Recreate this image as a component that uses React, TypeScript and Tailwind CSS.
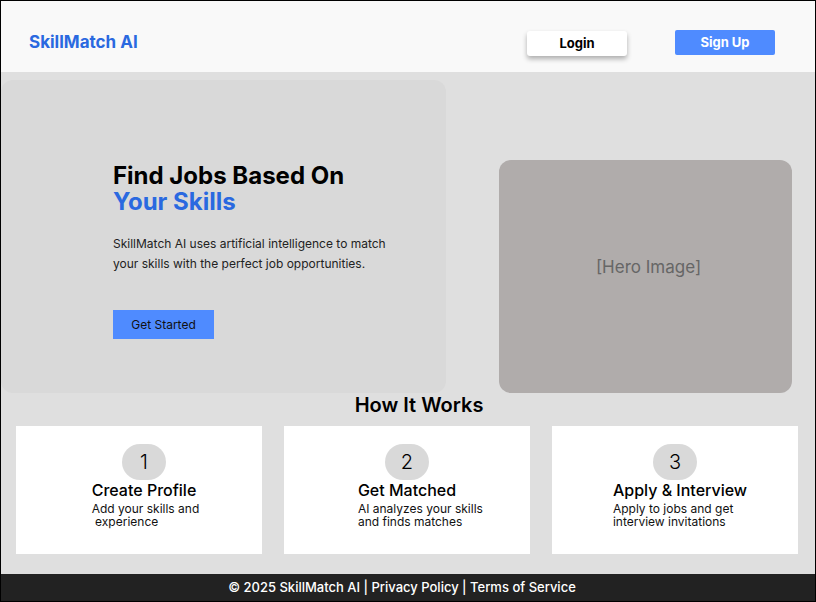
const steps = [
  { n: "1", title: "Create Profile", lines: ["Add your skills and", "\u00a0experience"], pad: "pl-[10px]", shift: "" },
  { n: "2", title: "Get Matched", lines: ["AI analyzes your skills", "and finds matches"], pad: "", shift: "" },
  { n: "3", title: "Apply & Interview", lines: ["Apply to jobs and get", "interview invitations"], pad: "", shift: "pl-[10px]" },
];

export default function App() {
  return (
    <div className="w-[816px] h-[602px] border border-black flex flex-col overflow-hidden font-['Inter','Liberation_Sans',sans-serif]">
      {/* header */}
      <header className="h-[71px] shrink-0 bg-[#f9f9f9] flex items-start pt-[29px] pl-[28px] pr-[40px]">
        <div className="text-[17px] leading-6 font-bold text-[#2a69e0]">SkillMatch AI</div>
        <button className="ml-auto mt-px w-[100px] h-[25px] bg-white rounded-[3px] shadow-[0_3px_5px_rgba(0,0,0,0.3)] text-[13px] font-bold text-black">
          Login
        </button>
        <button className="ml-[48px] w-[100px] h-[25px] bg-[#4f8bff] rounded-[2px] text-[13px] font-bold text-white">
          Sign Up
        </button>
      </header>

      <main className="flex-1 bg-[#dfdfdf] flex flex-col">
        {/* hero */}
        <section className="flex items-end pt-[8px]">
          <div className="w-[445px] h-[313px] bg-[#d9d9d9] rounded-[12px] pl-[112px] pt-[83px]">
            <h1 className="text-2xl leading-[26px] font-bold text-black">
              Find Jobs Based On
              <br />
              <span className="text-[#2a69e0]">Your Skills</span>
            </h1>
            <p className="mt-[19px] text-xs leading-5 text-[#222]">
              SkillMatch AI uses artificial intelligence to match
              <br />
              your skills with the perfect job opportunities.
            </p>
            <button className="mt-[36px] w-[101px] h-[29px] bg-[#4f8bff] text-xs text-[#111]">
              Get Started
            </button>
          </div>
          <div className="ml-[53px] w-[293px] h-[233px] bg-[#b0acab] rounded-[12px] flex items-center justify-center pb-[18px] pl-[6px] text-[17px] text-[#666]">
            [Hero Image]
          </div>
        </section>

        <h2 className="pl-[22px] text-center text-xl leading-6 font-semibold text-black">How It Works</h2>

        {/* steps */}
        <section className="mt-[9px] flex gap-[22px] pl-[15px]">
          {steps.map((s) => (
            <div key={s.n} className={`w-[246px] h-[128px] bg-white flex flex-col items-center pt-[18px] ${s.pad}`}>
              <div className="w-[44px] h-[36px] rounded-full bg-[#d9d9d9] flex items-center justify-center text-xl font-light text-black">
                {s.n}
              </div>
              <div className={`w-fit ${s.shift}`}>
                <h3 className="whitespace-nowrap text-base leading-5 font-medium text-black">{s.title}</h3>
                <p className="w-0 mt-[2px] whitespace-nowrap text-xs leading-[13px] text-[#111]">
                  {s.lines[0]}
                  <br />
                  {s.lines[1]}
                </p>
              </div>
            </div>
          ))}
        </section>
      </main>

      <footer className="h-[27px] shrink-0 bg-[#222] flex items-center justify-center pr-[12px] text-[13px] font-medium text-white">
        © 2025 SkillMatch AI | Privacy Policy | Terms of Service
      </footer>
    </div>
  );
}
